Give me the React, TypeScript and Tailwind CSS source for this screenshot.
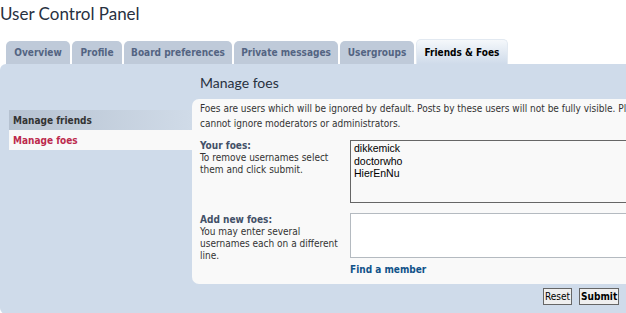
import React from "react";

const tabs = [
  { label: "Overview", w: "w-[64px]" },
  { label: "Profile", w: "w-[50px]" },
  { label: "Board preferences", w: "w-[108px]" },
  { label: "Private messages", w: "w-[104px]" },
  { label: "Usergroups", w: "w-[74px]" },
];

const foes = ["dikkemick", "doctorwho", "HierEnNu"];

export default function App() {
  return (
    <div className="w-[626px] h-[313px] overflow-hidden bg-white font-['DejaVu_Sans_Condensed','DejaVu_Sans',Verdana,sans-serif] text-[10px] text-[#333]">
      <h2 className="h-[40px] pt-[2px] font-['Lato',sans-serif] text-[17px] leading-[24px] text-[#28313f]">
        User Control Panel
      </h2>

      {/* tabs */}
      <div className="flex items-end gap-[2px] pl-[6px] h-[24px]">
        {tabs.map((t) => (
          <div
            key={t.label}
            className={`${t.w} h-[23px] shrink-0 flex items-center justify-center rounded-t-[5px] bg-[#bfcad9] font-bold text-[10px] text-[#536482] whitespace-nowrap`}
          >
            {t.label}
          </div>
        ))}
        <div className="w-[92px] h-[25px] shrink-0 flex items-center justify-center rounded-t-[5px] bg-gradient-to-b from-[#f5f8fb] to-[#cfdbea] border-t border-x border-[#e2e9f1] font-bold text-[10px] text-black whitespace-nowrap">
          Friends &amp; Foes
        </div>
      </div>

      {/* panel */}
      <div className="w-[760px] h-[250px] bg-[#cfdbea] rounded-tl-[6px] rounded-bl-[6px] flex">
        <div className="w-[192px] shrink-0 pl-[9px] pt-[46px]">
          <div className="h-[20px] flex items-center pl-[4px] bg-gradient-to-r from-[#b6c2d1] to-[#d0dbe8] font-bold text-[#333]">
            Manage friends
          </div>
          <div className="h-[20px] flex items-center pl-[4px] bg-[#f9f9f9] font-bold text-[#bc2a4d]">
            Manage foes
          </div>
        </div>

        <div className="flex-1 flex flex-col">
          <h2 className="h-[35px] pl-[8px] pt-[9px] font-['Lato',sans-serif] text-[14px] leading-[20px] text-[#28313f]">
            Manage foes
          </h2>
          <div className="h-[185px] bg-[#f9f9f9] rounded-l-[7px] pl-[8px] pt-[2px]">
            <p className="leading-[15px] text-[#333] whitespace-nowrap">
              Foes are users which will be ignored by default. Posts by these users will not be fully visible. Please note you
              <br />
              cannot ignore moderators or administrators.
            </p>

            <div className="flex mt-[9px]">
              <div className="w-[150px] shrink-0 leading-[12px]">
                <div className="font-bold text-[#425067]">Your foes:</div>
                <div className="pr-[6px]">To remove usernames select them and click submit.</div>
              </div>
              <div className="w-[300px] h-[63px] border border-[#666] bg-[#f9f9f9] pl-[3px] pt-[1px] font-['Liberation_Sans',Arial,sans-serif] text-[10.5px] leading-[12.5px] text-black">
                {foes.map((f) => (
                  <div key={f}>{f}</div>
                ))}
              </div>
            </div>

            <div className="flex mt-[10px]">
              <div className="w-[150px] shrink-0 pt-[1px] leading-[12px]">
                <div className="font-bold text-[#425067]">Add new foes:</div>
                <div className="pr-[6px]">You may enter several usernames each on a different line.</div>
              </div>
              <div>
                <div className="w-[300px] h-[45px] border border-[#b4bac0] bg-white" />
                <div className="mt-[4px] font-bold text-[#105289]">Find a member</div>
              </div>
            </div>
          </div>

          <div className="flex gap-[7px] pl-[351px] pt-[4px]">
            <button className="h-[17px] px-[1px] border border-[#666] bg-[#efefef] text-[10px] leading-[13px] text-black">
              Reset
            </button>
            <button className="h-[17px] px-[1px] border border-[#666] bg-[#efefef] font-bold text-[10px] leading-[13px] text-black">
              Submit
            </button>
          </div>
        </div>
      </div>
    </div>
  );
}
